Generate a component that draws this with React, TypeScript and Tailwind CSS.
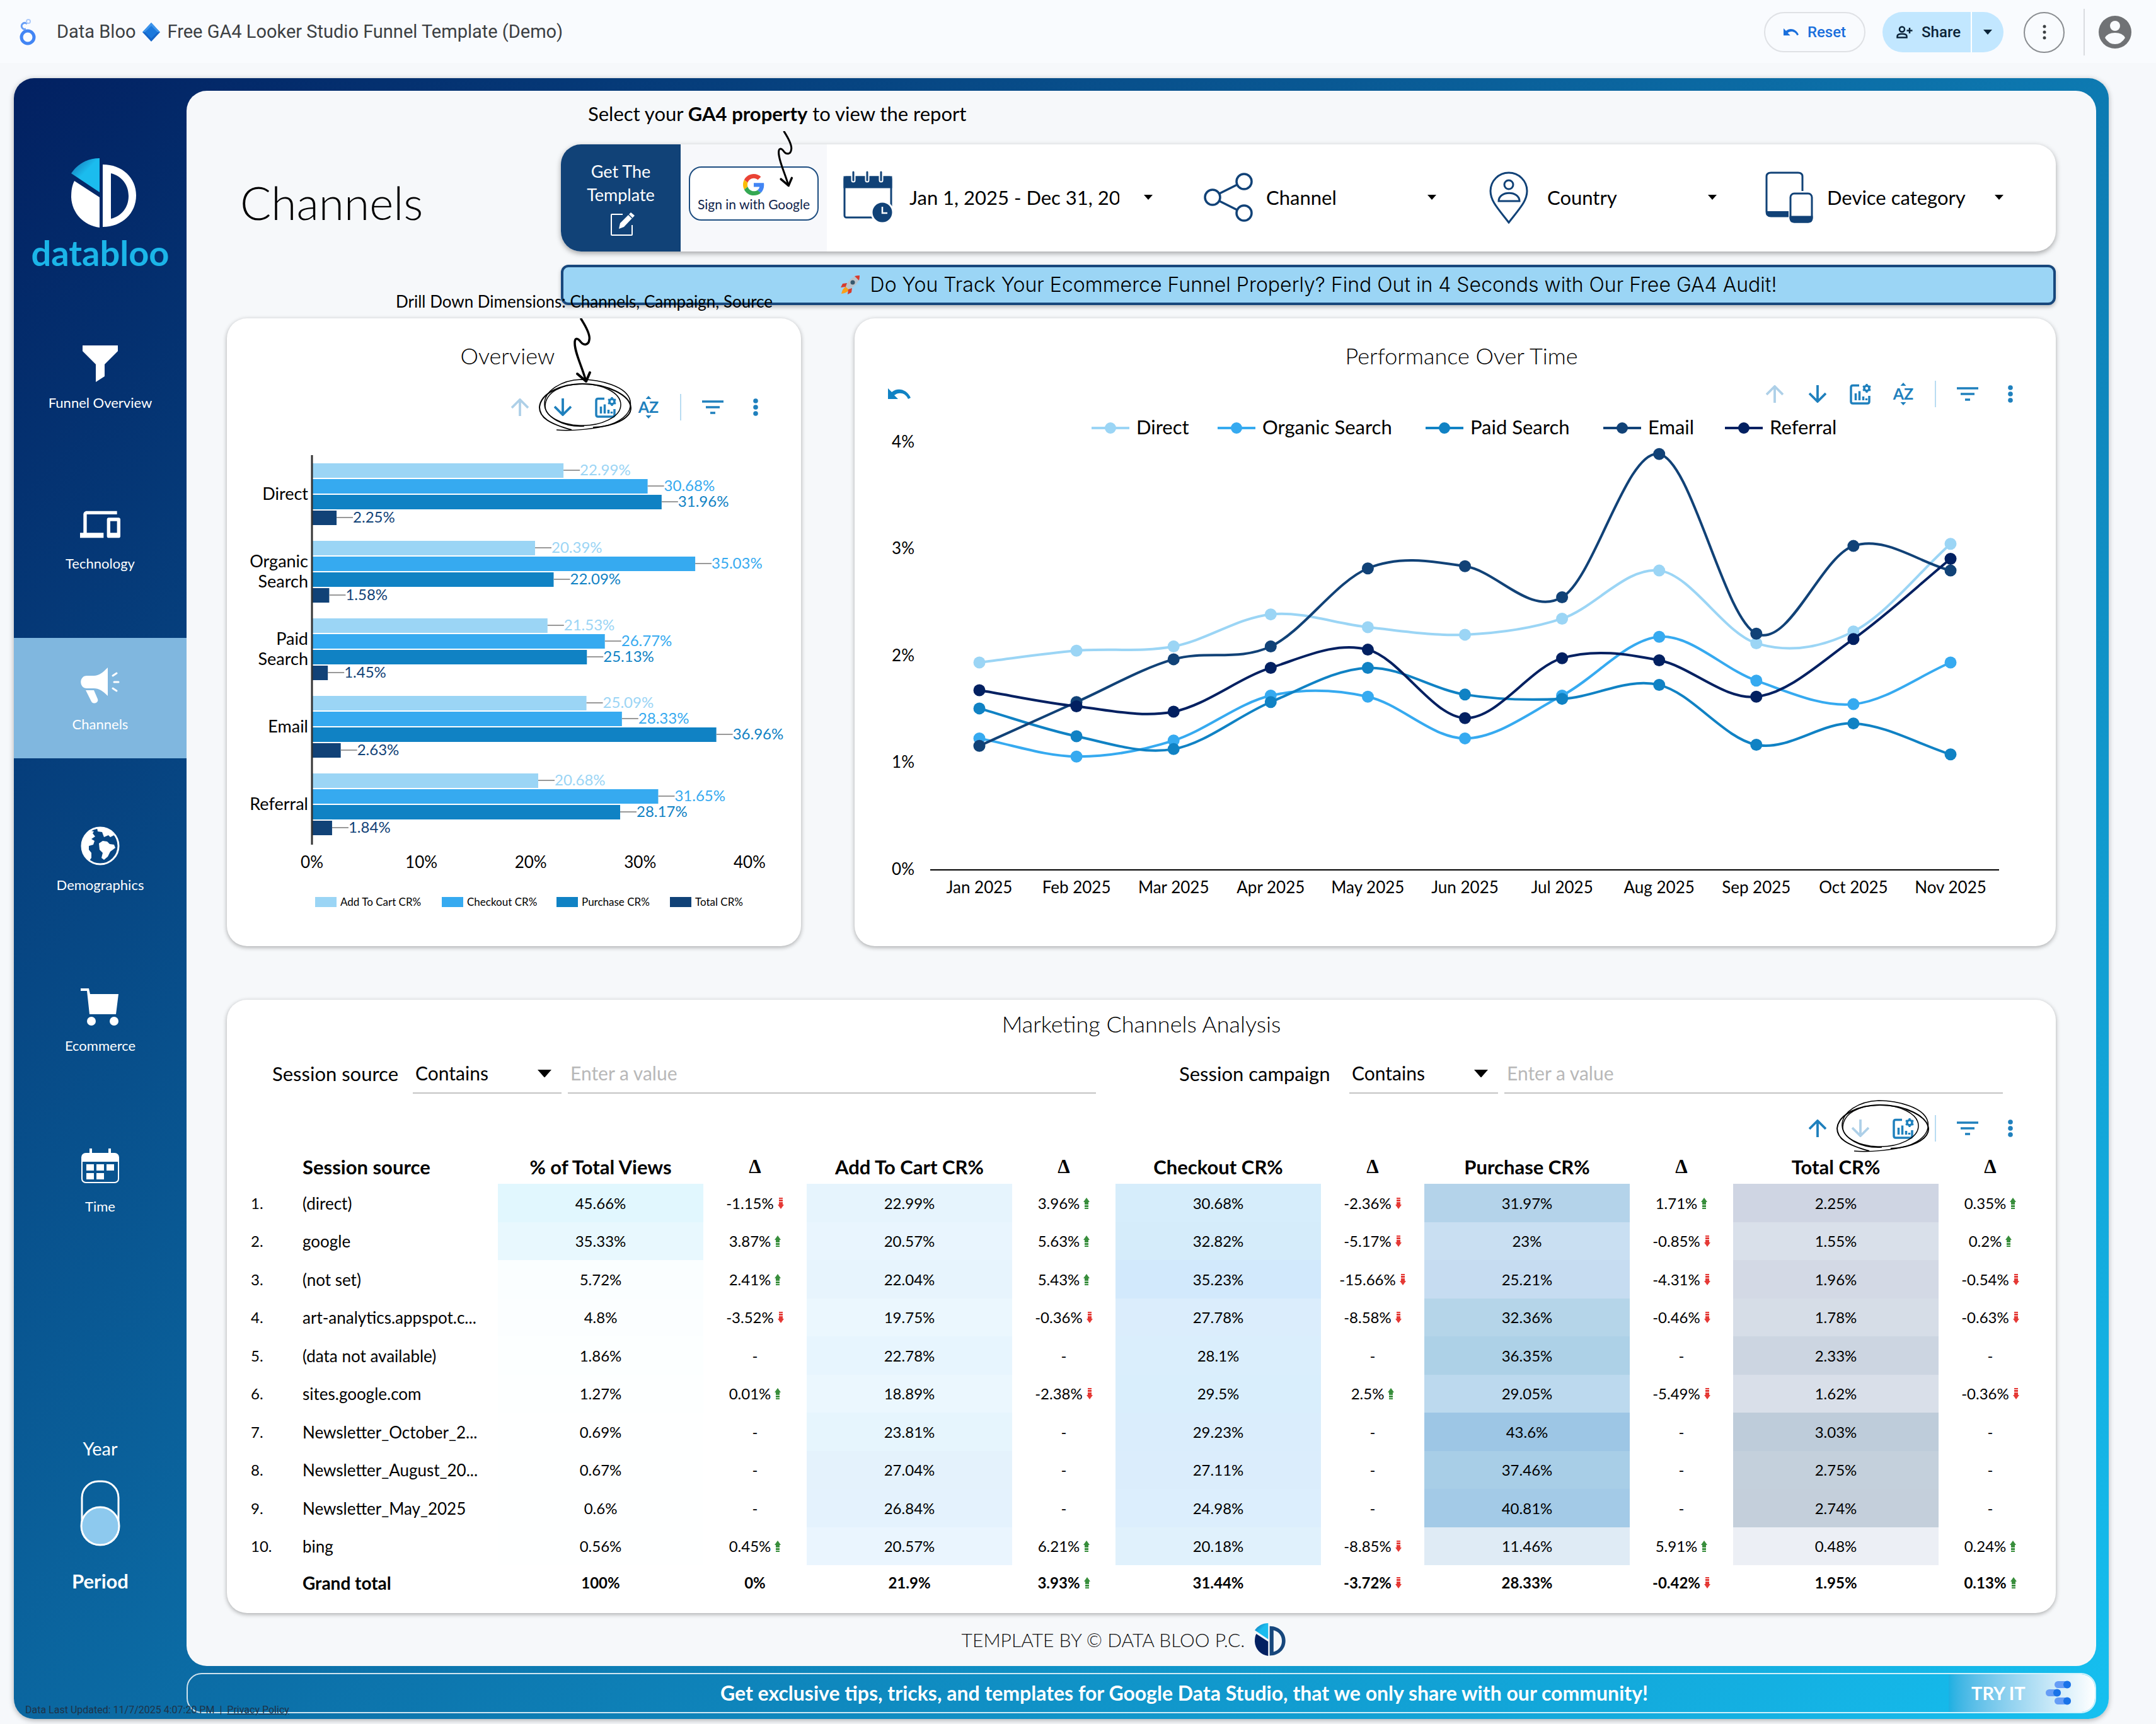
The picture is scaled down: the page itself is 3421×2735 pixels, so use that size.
import type { ReactNode } from "react";

const NAV = [
  { label: "Funnel Overview", icon: <FunnelIcon /> },
  { label: "Technology", icon: <DevicesIcon /> },
  { label: "Channels", icon: <MegaphoneIcon />, active: true },
  { label: "Demographics", icon: <GlobeIcon /> },
  { label: "Ecommerce", icon: <CartIcon /> },
  { label: "Time", icon: <CalendarIcon /> },
];

const BAR_SERIES = [
  { name: "Add To Cart CR%", color: "#9bd5f5", swatch: 140 },
  { name: "Checkout CR%", color: "#36aaf0", swatch: 341 },
  { name: "Purchase CR%", color: "#1082c4", swatch: 523 },
  { name: "Total CR%", color: "#114277", swatch: 703 },
];

const BAR_GROUPS = [
  { lines: ["Direct"], values: [22.99, 30.68, 31.96, 2.25] },
  { lines: ["Organic", "Search"], values: [20.39, 35.03, 22.09, 1.58] },
  { lines: ["Paid", "Search"], values: [21.53, 26.77, 25.13, 1.45] },
  { lines: ["Email"], values: [25.09, 28.33, 36.96, 2.63] },
  { lines: ["Referral"], values: [20.68, 31.65, 28.17, 1.84] },
];

const MONTHS = ["Jan", "Feb", "Mar", "Apr", "May", "Jun", "Jul", "Aug", "Sep", "Oct", "Nov"];

const LINE_SERIES = [
  { name: "Direct", color: "#9bd5f5", legend: 376, values: [1.94, 2.05, 2.09, 2.39, 2.27, 2.2, 2.35, 2.8, 2.12, 2.23, 3.05] },
  { name: "Organic Search", color: "#36aaf0", legend: 576, values: [1.23, 1.06, 1.21, 1.63, 1.62, 1.23, 1.63, 2.18, 1.77, 1.55, 1.94] },
  { name: "Paid Search", color: "#1082c4", legend: 906, values: [1.51, 1.25, 1.13, 1.57, 1.89, 1.64, 1.6, 1.73, 1.17, 1.37, 1.08] },
  { name: "Email", color: "#114277", legend: 1188, values: [1.16, 1.57, 1.97, 2.09, 2.82, 2.84, 2.55, 3.89, 2.21, 3.03, 2.8] },
  { name: "Referral", color: "#022061", legend: 1381, values: [1.68, 1.53, 1.48, 1.89, 2.06, 1.42, 1.98, 1.96, 1.62, 2.16, 2.91] },
];

const METRICS = ["% of Total Views", "Add To Cart CR%", "Checkout CR%", "Purchase CR%", "Total CR%"];

const ROWS = [
  ["(direct)", "45.66%", "-1.15%", "22.99%", "3.96%", "30.68%", "-2.36%", "31.97%", "1.71%", "2.25%", "0.35%"],
  ["google", "35.33%", "3.87%", "20.57%", "5.63%", "32.82%", "-5.17%", "23%", "-0.85%", "1.55%", "0.2%"],
  ["(not set)", "5.72%", "2.41%", "22.04%", "5.43%", "35.23%", "-15.66%", "25.21%", "-4.31%", "1.96%", "-0.54%"],
  ["art-analytics.appspot.c...", "4.8%", "-3.52%", "19.75%", "-0.36%", "27.78%", "-8.58%", "32.36%", "-0.46%", "1.78%", "-0.63%"],
  ["(data not available)", "1.86%", "-", "22.78%", "-", "28.1%", "-", "36.35%", "-", "2.33%", "-"],
  ["sites.google.com", "1.27%", "0.01%", "18.89%", "-2.38%", "29.5%", "2.5%", "29.05%", "-5.49%", "1.62%", "-0.36%"],
  ["Newsletter_October_2...", "0.69%", "-", "23.81%", "-", "29.23%", "-", "43.6%", "-", "3.03%", "-"],
  ["Newsletter_August_20...", "0.67%", "-", "27.04%", "-", "27.11%", "-", "37.46%", "-", "2.75%", "-"],
  ["Newsletter_May_2025", "0.6%", "-", "26.84%", "-", "24.98%", "-", "40.81%", "-", "2.74%", "-"],
  ["bing", "0.56%", "0.45%", "20.57%", "6.21%", "20.18%", "-8.85%", "11.46%", "5.91%", "0.48%", "0.24%"],
];

const TOTALS = ["Grand total", "100%", "0%", "21.9%", "3.93%", "31.44%", "-3.72%", "28.33%", "-0.42%", "1.95%", "0.13%"];

const HEAT = [
  ["#e1f7fe", "#e8f8fe", "#fafeff", "#fbfeff", "#fcffff", "#fdffff", "#feffff", "#feffff", "#feffff", "#feffff"],
  ["#e6f4fd", "#e9f5fe", "#e7f4fd", "#ebf7fe", "#e7f5fe", "#ebf7fe", "#e6f5fd", "#e4f2fc", "#e4f2fd", "#eaf5fe"],
  ["#d6edfb", "#d5ecfa", "#d2e9fc", "#dbedfc", "#daeefc", "#d9eefc", "#daedfc", "#dbedfc", "#dceefd", "#e0f1fc"],
  ["#b4d3ea", "#c9dff2", "#c6dcf1", "#b5d5e9", "#add1e7", "#bcd9ee", "#9dc6e5", "#a8cee7", "#a3cae7", "#dfebf5"],
  ["#cfd5e3", "#d9e0ea", "#d3d9e5", "#d6dde7", "#ccd5e1", "#d9dfe9", "#beccda", "#c4d0dc", "#c4cfdb", "#eceff5"],
];

function FunnelIcon() {
  return (
    <svg viewBox="0 0 64 64" className="size-16" fill="#fff">
      <path d="M4 3h56v9L39 33v19L25 61V33L4 12z" />
    </svg>
  );
}

function DevicesIcon() {
  return (
    <svg viewBox="0 0 24 24" className="size-16" fill="#fff">
      <path d="M4 6h18V4H4c-1.1 0-2 .9-2 2v11H0v3h14v-3H4V6zm19 2h-6c-.55 0-1 .45-1 1v10c0 .55.45 1 1 1h6c.55 0 1-.45 1-1V9c0-.55-.45-1-1-1zm-1 9h-4v-7h4v7z" />
    </svg>
  );
}

function MegaphoneIcon() {
  return (
    <svg viewBox="0 0 64 64" className="size-16" fill="#fff">
      <path d="M11 17h11c8 0 14-5 22-13v45c-8-8-14-12-22-12H11C-2 37-2 17 11 17z" />
      <path d="M9 40h13l6 14c2 6-7 9-10 4z" />
      <path d="M52 17l6-4M54 27h7M52 37l6 4" stroke="#fff" strokeWidth="3" strokeLinecap="round" fill="none" />
    </svg>
  );
}

function GlobeIcon() {
  return (
    <svg viewBox="0 0 64 64" className="size-16" fill="#fff">
      <circle cx="32" cy="32" r="29" fill="none" stroke="#fff" strokeWidth="3" />
      <path d="M17 8C9 13 3 21 3 33c1 9 6 17 12 22l3-4v-8l-4-5v-6l7-2 2-6-5-3 6-4-4-5 2-3z" />
      <path d="M27 3l1 6 7 1 3 8 7-3 3 3 8-4C50 7 41 2 32 2z" />
      <path d="M30 28l6-4 7 1 4 4 7 1 2 5-8 6-4 8-6 5-4-3 2-8-5-5z" />
    </svg>
  );
}

function CartIcon() {
  return (
    <svg viewBox="0 0 64 64" className="size-16" fill="#fff">
      <path d="M1 3h13l2 9h45l-4 32H15L11 7H1z" />
      <circle cx="18" cy="55" r="7" />
      <circle cx="54" cy="55" r="7" />
    </svg>
  );
}

function CalendarIcon() {
  return (
    <svg viewBox="0 0 64 64" className="size-16" fill="#fff">
      <rect x="3" y="10" width="58" height="46" rx="6" fill="none" stroke="#fff" strokeWidth="2" />
      <path d="M3 16q0-6 6-6h46q6 0 6 6v7H3zM15 2h4v7h-4zM45 2h4v7h-4z" />
      <path d="M10 27h12v10H10zM26 27h12v10H26zM42 27h12v10H42zM10 41h12v10H10zM26 41h12v10H26z" />
    </svg>
  );
}

function BrandMark({ id, left, right, className }: { id: string; left: string; right: string; className: string }) {
  return (
    <svg viewBox="0 0 104 110" className={className}>
      <defs>
        <linearGradient id={id} x1="0" y1="0" x2="0.7" y2="0.8">
          <stop offset="0.15" stopColor="#157fbd" />
          <stop offset="0.6" stopColor="#1bbcee" />
        </linearGradient>
      </defs>
      <path d="M45 0v54L0 24C10 9 26 0 45 0z" fill={`url(#${id})`} />
      <path d="M5 36l40 26v48C20 107 1 87 0 62c0-10 1-18 5-26z" fill={left} />
      <path fillRule="evenodd" d="M50 10c31 0 53 21 53 49s-22 50-53 50zM63 24v72c17-4 28-18 28-36S80 28 63 24z" fill={right} />
    </svg>
  );
}

function LookerLogo() {
  return (
    <svg viewBox="0 0 28 42" className="h-[42px] w-7" fill="none">
      <circle cx="14" cy="29" r="10" stroke="#4285f4" strokeWidth="5" />
      <path d="M11 16a5 5 0 1 1 2-8" stroke="#669df6" strokeWidth="3" />
      <circle cx="15" cy="4" r="3" stroke="#aecbfa" strokeWidth="2" />
    </svg>
  );
}

function UndoIcon({ className }: { className: string }) {
  return (
    <svg viewBox="0 0 36 18" className={className}>
      <path d="M0 0v17h16l-6-6c7-6 18-4 22 6l4-2C30 1 15-2 6 6z" fill="currentColor" />
    </svg>
  );
}

function Caret({ className = "w-3.5" }: { className?: string }) {
  return (
    <svg viewBox="0 0 14 8" className={`${className} pointer-events-none shrink-0`}>
      <path d="M0 0h14L7 8z" fill="currentColor" />
    </svg>
  );
}

function SquiggleArrow({ className }: { className: string }) {
  return (
    <svg viewBox="0 0 30 104" className={`pointer-events-none absolute ${className}`} fill="none" stroke="#000" strokeLinecap="round" strokeLinejoin="round">
      <path d="M13 1C20 12 28 26 26 34C25 43 17 43 13 38C7 30 3 31 3 39C3 55 14 75 21 100" strokeWidth="3.5" />
      <path d="M7 88L21 100L27 86" strokeWidth="4" />
    </svg>
  );
}

function Scribble({ className }: { className: string }) {
  return (
    <svg viewBox="0 0 148 84" className={`pointer-events-none absolute w-[148px] ${className}`} fill="none" stroke="#000">
      <path d="M28 82c24 2 60-1 84-8c24-8 36-22 33-38c-5-24-50-34-78-34C36 3 8 20 9 42c1 20 30 36 63 34" strokeWidth="1.5" />
      <path d="M130 42c0 20-32 34-64 33C34 74 10 60 10 44C11 22 36 10 66 9c34-1 64 14 64 33z" strokeWidth="1.5" />
      <path d="M52 82C16 72 1 62 1 46c2-22 34-37 68-37c40 0 76 18 77 38c0 18-30 30-60 31" strokeWidth="2" />
    </svg>
  );
}

function ArrowIcon({ down = false, faded = false }: { down?: boolean; faded?: boolean }) {
  return (
    <svg viewBox="0 0 28 28" className="size-7" fill="none" stroke={faded ? "#aed0e8" : "#1f80bd"} strokeWidth="3.8">
      <path d={down ? "M14 0v26M1 13l13 13l13-13" : "M14 28V2M1 15L14 2l13 13"} />
    </svg>
  );
}

function ChartGearIcon() {
  return (
    <svg viewBox="0 0 34 34" className="size-[34px]" fill="none" stroke="#1f80bd" strokeWidth="3.5">
      <path d="M15 3.5H5q-3 0-3 3V29q0 3 3 3h23q3 0 3-3V20" />
      <path d="M9.5 27v-11M15.500 27v-14.500M21.500 27v-6M26.500 27v-3" />
      <circle cx="27" cy="8" r="4" />
      <path d="M27 1v3M27 12v3M21 4.500l2.500 1.500M30.500 10l2.500 1.500M21 11.500l2.500-1.500M30.500 6l2.500-1.500" strokeWidth="3" />
    </svg>
  );
}

function SortIcon() {
  return (
    <svg viewBox="0 0 34 36" className="h-9 w-[34px] overflow-visible" fill="#1f80bd">
      <path d="M12.500 5l4.500-5l4.500 5zM12.500 31l4.500 5l4.500-5z" />
      <text x="17" y="27" textAnchor="middle" fontSize="25" fontWeight="700">AZ</text>
    </svg>
  );
}

function Toolbar({ upFaded, downFaded, sort, left, children, circled }: { upFaded?: boolean; downFaded?: boolean; sort?: boolean; left?: ReactNode; children?: ReactNode; circled?: boolean }) {
  const button = "flex h-12 w-[68px] items-center justify-center";
  return (
    <div className="flex items-center justify-end pr-[38px]">
      {left}
      <button className={button} aria-label="Drill up"><ArrowIcon faded={upFaded} /></button>
      <div className="relative flex">
        <button className={button} aria-label="Drill down"><ArrowIcon down faded={downFaded} /></button>
        <button className={button} aria-label="Chart settings"><ChartGearIcon /></button>
        {circled && <Scribble className="-top-[22px] -left-1" />}
        {children}
      </div>
      {sort && <button className={button} aria-label="Sort"><SortIcon /></button>}
      <span className="mx-4 h-[42px] w-0.5 bg-[#b9dcf2]" />
      <button className={button} aria-label="Filter">
        <svg viewBox="0 0 34 22" className="w-[34px]" stroke="#1f80bd" strokeWidth="3.500">
          <path d="M0 2h34M6 11h22M13 20h8" />
        </svg>
      </button>
      <button className={button} aria-label="More">
        <svg viewBox="0 0 8 28" className="h-7" fill="#1f80bd">
          <circle cx="4" cy="4" r="3.800" />
          <circle cx="4" cy="14" r="3.800" />
          <circle cx="4" cy="24" r="3.800" />
        </svg>
      </button>
    </div>
  );
}

function TopBar() {
  return (
    <header className="flex h-[100px] items-center bg-[#f9fbfe] pt-0.5 pr-[39px] pl-[30px] font-[Roboto,sans-serif]">
      <LookerLogo />
      <h1 className="ml-8 flex items-center gap-2.5 text-[29px] text-[#3c4043]">
        Data Bloo
        <svg viewBox="0 0 30 30" className="size-[30px]">
          <path d="M15 0l14 15l-14 15L1 15z" fill="#1565c8" />
          <path d="M15 0l14 15H1z" fill="#3d95ec" />
          <path d="M15 5l10 10l-10 10L5 15z" fill="#1b78dc" />
        </svg>
        Free GA4 Looker Studio Funnel Template (Demo)
      </h1>
      <div className="ml-auto flex items-center text-2xl font-medium">
        <button className="flex h-16 items-center gap-3.5 rounded-full border-2 border-[#dfe1e5] px-[29px] text-[#1a6fdc]">
          <UndoIcon className="w-6" />
          Reset
        </button>
        <div className="ml-[27px] flex h-16 overflow-hidden rounded-full bg-[#c2e7ff] text-[#0b2338]">
          <button className="flex items-center gap-3.5 border-r-2 border-white pr-4 pl-[22px]">
            <svg viewBox="0 0 26 20" className="w-[26px]" fill="none" stroke="currentColor" strokeWidth="2.500">
              <circle cx="9" cy="5.500" r="4" />
              <path d="M1.500 18.500v-2c0-5 15-5 15 0v2zM21 3v9M16.500 7.500h9" />
            </svg>
            Share
          </button>
          <button className="flex w-[50px] items-center justify-center" aria-label="Share options"><Caret /></button>
        </div>
        <button className="ml-8 flex size-[65px] items-center justify-center rounded-full border-2 border-[#8a8d91]" aria-label="More options">
          <svg viewBox="0 0 6 24" className="h-6" fill="#3c4043">
            <circle cx="3" cy="3" r="2.500" />
            <circle cx="3" cy="12" r="2.500" />
            <circle cx="3" cy="21" r="2.500" />
          </svg>
        </button>
        <span className="mr-[22px] ml-[30px] h-[74px] w-0.5 bg-[#dadce0]" />
        <button aria-label="Account">
          <svg viewBox="0 0 52 52" className="size-[52px]">
            <circle cx="26" cy="26" r="26" fill="#707275" />
            <circle cx="26" cy="16" r="8" fill="#f9fbfe" />
            <path d="M10 35q4-8 16-8t16 8q-6 10-16 10T10 35z" fill="#f9fbfe" />
          </svg>
        </button>
      </div>
    </header>
  );
}

function Sidebar() {
  return (
    <aside className="flex w-[274px] shrink-0 flex-col items-center pt-[127px] text-white">
      <BrandMark id="brand-side" left="#fff" right="#fff" className="ml-3 h-[110px]" />
      <p className="mt-3 text-[56px] leading-14 font-bold text-[#1bb5e8]">databloo</p>
      <nav className="mt-[73px] flex w-full flex-col gap-16">
        {NAV.map((item) => (
          <a
            key={item.label}
            href="#"
            className={`flex h-[191px] flex-col items-center gap-4 pt-[43px] text-[22px] leading-7 ${item.active ? "bg-[#80b7df]" : ""}`}
          >
            {item.icon}
            {item.label}
          </a>
        ))}
      </nav>
      <p className="mt-[312px] text-[29px] leading-9">Year</p>
      <button role="switch" aria-checked="true" aria-label="Year or period" className="my-8">
        <svg viewBox="0 0 64 106" className="h-[106px]">
          <rect x="3" y="2" width="58" height="100" rx="26" fill="none" stroke="#fff" strokeWidth="3" />
          <circle cx="32" cy="73" r="30" fill="#8dc9ee" stroke="#fff" strokeWidth="3" />
        </svg>
      </button>
      <p className="mt-1 text-[31px] leading-9 font-bold">Period</p>
    </aside>
  );
}

function FilterSelect({ label, icon, iconWidth, pad }: { label: string; icon: ReactNode; iconWidth: string; pad: string }) {
  return (
    <div className={`flex items-center gap-5 pl-[26px] ${pad}`}>
      <span className={`${iconWidth} shrink-0`}>{icon}</span>
      <div className="relative flex flex-1 items-center">
        <select aria-label={label} className="w-full appearance-none bg-transparent text-[31px] leading-10">
          <option>{label}</option>
        </select>
        <Caret className="absolute right-0 w-3.5" />
      </div>
    </div>
  );
}

function FilterBar() {
  return (
    <div className="flex h-[170px] rounded-[32px] bg-white shadow-[0_3px_8px_rgba(0,0,0,0.35)]">
      <a href="#" className="flex w-[190px] shrink-0 flex-col items-center rounded-l-[32px] bg-[#114277] pt-6 text-center text-[27px] leading-[37px] text-white">
        Get The
        <br />
        Template
        <svg viewBox="-6 0 46 40" className="mt-2 h-10" fill="none" stroke="#fff" strokeWidth="2">
          <path d="M20 5H3q-1 0-1 1v31q0 1 1 1h31q1 0 1-1V22" />
          <path d="M14 28l2-9L33 2l6 5l-17 18z" fill="#fff" stroke="none" />
          <path d="M29 5l6 6" stroke="#114277" strokeWidth="1.500" />
        </svg>
      </a>
      <div className="relative flex w-[232px] shrink-0 items-center bg-[#f7f8fb] pb-3.5 pl-[13px]">
        <button className="flex h-[86px] w-[206px] flex-col items-center justify-center rounded-[20px] border-2 border-[#1d4d80] bg-white text-[21px] leading-7 whitespace-nowrap text-[#0f1f4b]">
          <svg viewBox="0 0 48 48" className="size-[34px]">
            <path fill="#EA4335" d="M24 9.500c3.540 0 6.710 1.220 9.210 3.600l6.850-6.850C35.900 2.380 30.470 0 24 0 14.620 0 6.510 5.380 2.560 13.220l7.980 6.190C12.430 13.720 17.740 9.500 24 9.500z" />
            <path fill="#4285F4" d="M46.980 24.550c0-1.570-.15-3.090-.38-4.550H24v9.020h12.940c-.58 2.960-2.260 5.480-4.780 7.180l7.730 6c4.510-4.180 7.090-10.360 7.090-17.650z" />
            <path fill="#FBBC05" d="M10.530 28.590c-.48-1.450-.76-2.990-.76-4.590s.27-3.140.76-4.590l-7.980-6.190C.92 16.460 0 20.120 0 24c0 3.880.92 7.540 2.560 10.780l7.970-6.190z" />
            <path fill="#34A853" d="M24 48c6.480 0 11.930-2.130 15.890-5.810l-7.730-6c-2.150 1.450-4.920 2.300-8.160 2.300-6.260 0-11.570-4.220-13.470-9.910l-7.980 6.190C6.510 42.620 14.620 48 24 48z" />
          </svg>
          Sign in with Google
        </button>
        <SquiggleArrow className="-top-[21px] left-[153px] h-[90px]" />
      </div>
      <div className="grid flex-1 grid-cols-[572fr_453fr_438fr_487fr] pb-0.5 text-black">
        <div className="flex min-w-0 items-center gap-5 pr-[55px] pl-[26px]">
          <svg viewBox="0 0 85 84" className="w-[85px] shrink-0" fill="none" stroke="#114277" strokeWidth="3">
            <rect x="2" y="10" width="74" height="64" rx="3" />
            <path d="M2 10h74v16H2z" fill="#114277" />
            <path d="M16 1v14M38 1v14M60 1v14" stroke="#fff" strokeWidth="7" strokeLinecap="round" />
            <path d="M16 2v13M38 2v13M60 2v13" strokeLinecap="round" />
            <circle cx="62" cy="66" r="17" fill="#114277" stroke="#fff" />
            <path d="M62 57v10h8" stroke="#fff" strokeWidth="2.500" />
          </svg>
          <button className="flex min-w-0 flex-1 items-center justify-between text-left text-[31px] leading-10">
            <span className="w-[333px] overflow-hidden whitespace-nowrap">Jan 1, 2025 - Dec 31, 2025</span>
            <Caret />
          </button>
        </div>
        <FilterSelect
          label="Channel"
          iconWidth="w-[79px]"
          pad="pr-[58px]"
          icon={
            <svg viewBox="0 0 79 80" className="w-[79px]" fill="none" stroke="#114277" strokeWidth="3.500">
              <circle cx="14" cy="40" r="12" />
              <circle cx="64" cy="15" r="12" />
              <circle cx="64" cy="65" r="12" />
              <path d="M25 34l28-14M25 46l28 14" />
            </svg>
          }
        />
        <FilterSelect
          label="Country"
          iconWidth="w-[72px]"
          pad="pr-[51px]"
          icon={
            <svg viewBox="0 0 72 84" className="w-[72px]" fill="none" stroke="#114277" strokeWidth="3">
              <path d="M31 82C14 60 2 48 2 32a29 29 0 0 1 58 0c0 16-12 28-29 50z" />
              <circle cx="31" cy="22" r="7" />
              <path d="M15 48c0-17 33-17 33 0z" />
            </svg>
          }
        />
        <FilterSelect
          label="Device category"
          iconWidth="w-[78px]"
          pad="pr-[83px]"
          icon={
            <svg viewBox="0 0 78 84" className="w-[78px]" fill="none" stroke="#114277" strokeWidth="3">
              <path d="M37 72H9q-7 0-7-7V9q0-6 7-6h43q7 0 7 6v23" />
              <path d="M2 64h35v9H9q-7 0-7-7z" fill="#114277" stroke="none" />
              <rect x="40" y="36" width="34" height="45" rx="6" />
              <path d="M40 73h34v2q0 6-6 6H46q-6 0-6-6z" fill="#114277" />
            </svg>
          }
        />
      </div>
    </div>
  );
}

function OverviewChart() {
  return (
    <svg viewBox="0 0 911 831" className="w-full" role="img" aria-label="Conversion rates by channel">
      <g fontSize="24">
        {BAR_GROUPS.map((group, g) => (
          <g key={g}>
            {group.lines.map((line, i) => (
              <text key={line} x="129" y={123 + g * 123 + (i * 2 - group.lines.length + 1) * 16} textAnchor="end" fontSize="27">{line}</text>
            ))}
            {group.values.map((value, i) => {
              const end = 135 + value * 17.36;
              const top = 65 + g * 123 + i * 25;
              return (
                <g key={i} fill={BAR_SERIES[i].color}>
                  <rect x="136" y={top} width={end - 136} height="23" />
                  <path d={`M${end} ${top + 11}h26`} stroke="#999" strokeWidth="2" />
                  <text x={end + 26} y={top + 19}>{value.toFixed(2)}%</text>
                </g>
              );
            })}
          </g>
        ))}
        {[0, 10, 20, 30, 40].map((tick) => (
          <text key={tick} x={135 + tick * 17.36} y="707" textAnchor="middle" fontSize="26">{tick}%</text>
        ))}
      </g>
      <path d="M135 52v618" stroke="#333" strokeWidth="3" />
      {BAR_SERIES.map((series) => (
        <g key={series.name}>
          <rect x={series.swatch} y="753" width="34" height="16" fill={series.color} />
          <text x={series.swatch + 40} y="767" fontSize="17">{series.name}</text>
        </g>
      ))}
    </svg>
  );
}

const px = (i: number) => 198 + i * 154.1;
const py = (value: number) => 731 - value * 169.6;

// Catmull-Rom tangents, straight at both ends
function smoothPath(values: number[]) {
  const last = values.length - 1;
  const slope = (i: number) => (py(values[i + 1]) - py(values[i - 1])) / 2;
  let d = `M${px(0)} ${py(values[0])}`;
  for (let i = 0; i < last; i++) {
    const y0 = py(values[i]);
    const y1 = py(values[i + 1]);
    const c1 = i === 0 ? y0 + (y1 - y0) / 3 : y0 + slope(i) / 3;
    const c2 = i + 1 === last ? y1 - (y1 - y0) / 3 : y1 - slope(i + 1) / 3;
    d += `C${px(i) + 51.4} ${c1} ${px(i + 1) - 51.4} ${c2} ${px(i + 1)} ${y1}`;
  }
  return d;
}

function PerformanceChart() {
  return (
    <svg viewBox="0 0 1906 852" className="w-full" role="img" aria-label="Performance over time">
      {LINE_SERIES.map((series) => (
        <g key={series.name}>
          <path d={`M${series.legend} 30h60`} stroke={series.color} strokeWidth="4" />
          <circle cx={series.legend + 30} cy="30" r="9" fill={series.color} />
          <text x={series.legend + 71} y="40" fontSize="31">{series.name}</text>
          <path d={smoothPath(series.values)} fill="none" stroke={series.color} strokeWidth="4" />
          {series.values.map((value, i) => (
            <circle key={i} cx={px(i)} cy={py(value)} r="9.500" fill={series.color} />
          ))}
        </g>
      ))}
      <g fontSize="26">
        {[0, 1, 2, 3, 4].map((tick) => (
          <text key={tick} x="95" y={py(tick) + 8} textAnchor="end">{tick}%</text>
        ))}
        {MONTHS.map((month, i) => (
          <text key={month} x={px(i)} y="768" textAnchor="middle">{month} 2025</text>
        ))}
      </g>
      <path d="M120 731h1696" stroke="#000" strokeWidth="2" />
    </svg>
  );
}

function ConditionField({ id, label, labelWidth }: { id: string; label: string; labelWidth: string }) {
  return (
    <div className="flex h-16 text-[31px]">
      <label htmlFor={id} className={`${labelWidth} flex shrink-0 items-center`}>{label}</label>
      <div className="relative mr-2.5 flex w-[236px] items-center">
        <select aria-label={`${label} condition`} className="size-full appearance-none border-b-2 border-[#c4c4c4] bg-transparent px-1 text-[30px]">
          <option>Contains</option>
        </select>
        <Caret className="absolute right-4 w-[22px]" />
      </div>
      <input id={id} placeholder="Enter a value" className="min-w-0 flex-1 border-b-2 border-[#c4c4c4] px-1 text-[30px] placeholder:text-[#b8b8b8]" />
    </div>
  );
}

function Delta({ value }: { value: string }) {
  if (value === "-" || value === "0%") return <>{value}</>;
  const down = value.startsWith("-");
  return (
    <span className="inline-flex items-center gap-1.5">
      {value}
      <svg viewBox="0 0 10 18" className="h-[18px] w-2.5" fill={down ? "#e53935" : "#388e3c"}>
        <path d={down ? "M5 18L0 11h2V7h6v4h2zM2 0h6v2H2zM2 3h6v3H2z" : "M5 0L0 7h2v4h6V7h2zM2 12h6v3H2zM2 16h6v2H2z"} />
      </svg>
    </span>
  );
}

function ChannelsTable() {
  return (
    <table className="mt-2.5 w-full table-fixed border-collapse text-[24px] whitespace-nowrap">
      <colgroup>
        <col className="w-[82px]" />
        <col />
        {METRICS.flatMap((metric) => [
          <col key={metric} className="w-[326px]" />,
          <col key={`${metric} change`} className="w-[164px]" />,
        ])}
      </colgroup>
      <thead>
        <tr className="h-[54px] text-[31px] leading-9">
          <th />
          <th className="text-left">Session source</th>
          {METRICS.flatMap((metric) => [
            <th key={metric}>{metric}</th>,
            <th key={`${metric} change`} className="font-['Liberation_Serif',serif]">Δ</th>,
          ])}
        </tr>
      </thead>
      <tbody className="text-center">
        {ROWS.map((row, r) => (
          <tr key={row[0]} className="odd:h-[61px] even:h-[60px] last:h-[55px]">
            <td className="text-left">{r + 1}.</td>
            <td className="text-left text-[26px] leading-8">{row[0]}</td>
            {row.slice(1).map((cell, c) => (
              <td key={c} style={c % 2 === 0 ? { backgroundColor: HEAT[c / 2][r] } : undefined}>
                {c % 2 === 0 ? cell : <Delta value={cell} />}
              </td>
            ))}
          </tr>
        ))}
      </tbody>
      <tfoot className="text-center font-bold">
        <tr className="h-14">
          <td />
          {TOTALS.map((cell, c) => (
            <td key={c} className={c === 0 ? "text-left text-[28px] leading-8" : ""}>
              {c > 0 && c % 2 === 0 ? <Delta value={cell} /> : cell}
            </td>
          ))}
        </tr>
      </tfoot>
    </table>
  );
}

export default function App() {
  const card = "rounded-[32px] bg-white shadow-[0_2px_7px_rgba(0,0,0,0.32)]";
  return (
    <div className="min-h-screen bg-[#f6f8fb] font-[Lato,sans-serif] text-black">
      <TopBar />
      <main className="relative mt-6 mr-[75px] ml-[22px] flex rounded-[32px] bg-[linear-gradient(135deg,#022061,#16c0f0)] shadow-[0_2px_8px_rgba(0,0,0,0.3)]">
        <Sidebar />
        <div className="flex min-w-0 flex-1 flex-col pt-5 pr-5 pb-[9px]">
          <div className="rounded-[32px] bg-[#f6f8fa] pr-16 pl-16">
            <section className="relative flex">
              <h2 className="w-[530px] shrink-0 pt-[133px] pl-[21px] text-[73px] leading-[88px] font-light">Channels</h2>
              <div className="min-w-0 flex-1 pt-4">
                <p className="mb-[29px] pl-[43px] text-[31px] leading-10">
                  Select your <b>GA4 property</b> to view the report
                </p>
                <FilterBar />
                <a href="#" className="mt-[21px] flex h-16 items-center justify-center gap-4 rounded-xl border-4 border-[#17477c] bg-[#9bd5f5] font-[Inter,sans-serif] text-[32px] font-light shadow-[0_3px_6px_rgba(0,0,0,0.25)]">
                  <svg viewBox="0 0 32 32" className="size-8">
                    <path d="M2 30q2-9 8-12l5 5q-4 6-13 7z" fill="#f9a01b" />
                    <path d="M11 13l-7 1l-3 6l8-1zM19 21l-1 7l-6 3l1-8z" fill="#d83b2d" />
                    <path d="M9 19C13 8 20 2 31 1C30 12 24 19 13 23z" fill="#b9c4cc" />
                    <path d="M23 2q4-1 8-1q0 4-1 8z" fill="#d83b2d" />
                    <circle cx="20" cy="12" r="3.500" fill="#37596e" />
                  </svg>
                  Do You Track Your Ecommerce Funnel Properly? Find Out in 4 Seconds with Our Free GA4 Audit!
                </a>
              </div>
              <p className="absolute -bottom-2.5 left-[268px] text-[26px] leading-8">Drill Down Dimensions: Channels, Campaign, Source</p>
            </section>

            <section className="mt-[21px] grid grid-cols-[911fr_1906fr] gap-[85px]">
              <article className={card}>
                <h3 className="mr-5 mb-9 pt-[37px] text-center text-[36px] leading-11 font-light">Overview</h3>
                <Toolbar upFaded sort circled>
                  <SquiggleArrow className="-top-[117px] left-[50px] h-[104px]" />
                </Toolbar>
                <OverviewChart />
              </article>
              <article className={card}>
                <h3 className="mb-[15px] ml-5 pt-[37px] text-center text-[36px] leading-11 font-light">Performance Over Time</h3>
                <Toolbar
                  upFaded
                  sort
                  left={<button className="mr-auto ml-[53px] text-[#1082c4]" aria-label="Undo"><UndoIcon className="w-9" /></button>}
                />
                <PerformanceChart />
              </article>
            </section>

            <section className={`mt-[85px] py-4 ${card}`}>
              <h3 className="text-center text-[36px] leading-11 font-light">Marketing Channels Analysis</h3>
              <div className="mt-[25px] mb-[31px] grid grid-cols-2 gap-[132px] pr-[84px] pl-[72px]">
                <ConditionField id="session-source" label="Session source" labelWidth="w-[223px]" />
                <ConditionField id="session-campaign" label="Session campaign" labelWidth="w-[270px]" />
              </div>
              <Toolbar downFaded circled />
              <div className="pr-[22px] pb-1 pl-[38px]">
                <ChannelsTable />
              </div>
            </section>

            <footer className="flex h-[84px] items-center justify-center gap-4 pr-14 text-[30px] font-light text-[#111]">
              TEMPLATE BY © DATA BLOO P.C.
              <BrandMark id="brand-foot" left="#022061" right="#17477c" className="h-[52px]" />
            </footer>
          </div>

          <a href="#" className="mt-[11px] flex h-16 items-center overflow-hidden rounded-3xl border-2 border-white/80 text-[32px] font-bold text-white">
            <span className="flex-1 pl-[368px] text-center">
              Get exclusive tips, tricks, and templates for Google Data Studio, that we only share with our community!
            </span>
            <span className="flex h-full w-[232px] items-center gap-8 bg-linear-to-r from-[#1bb0e2] to-white pl-9 text-[29px]">
              TRY IT
              <svg viewBox="0 0 42 40" className="w-[42px]" fill="#669df6">
                <rect x="14" y="1" width="26" height="11" rx="5.500" />
                <rect x="0" y="14" width="24" height="11" rx="5.500" />
                <rect x="14" y="27" width="26" height="11" rx="5.500" />
                <circle cx="34" cy="6.500" r="6" fill="#1a73e8" />
                <circle cx="18" cy="19.500" r="6" fill="#1a73e8" />
                <circle cx="34" cy="32.500" r="6" fill="#1a73e8" />
              </svg>
            </span>
          </a>
        </div>
        <p className="absolute bottom-1 left-[18px] flex gap-2 font-[Roboto,sans-serif] text-base leading-5 text-[#1f3348]">
          Data Last Updated: 11/7/2025 4:07:20 PM
          <span>|</span>
          <a href="#" className="underline">Privacy Policy</a>
        </p>
      </main>
    </div>
  );
}
